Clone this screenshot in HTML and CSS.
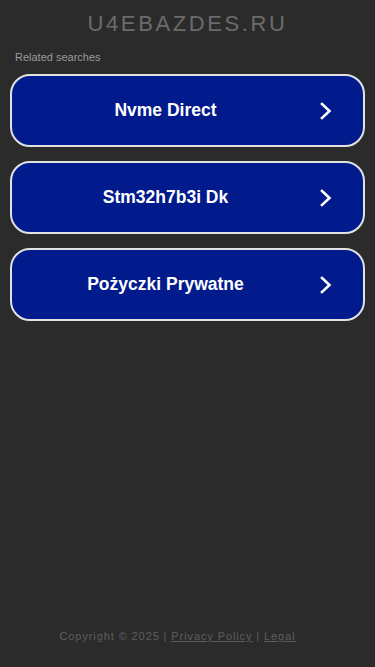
FILE: index.html
```html
<!DOCTYPE html>
<html lang="en">
<head>
  <meta charset="UTF-8" />
  <meta name="viewport" content="width=device-width, initial-scale=1.0"/>
  <title>u4ebazdes.ru</title>
  <link rel="stylesheet" href="styles.css">
</head>
<body>
  <div class="page">
    <header class="site-header">
      <h1 class="domain">U4EBAZDES.RU</h1>
    </header>

    <main class="main-content">
      <p class="related-title">Related searches</p>
      <div class="link-list">
        <a href="#" class="search-link">
          <span class="link-text">Nvme Direct</span>
          <svg class="chevron" viewBox="0 0 14 20" width="14" height="20"><path d="M3 3 L10.5 10 L3 17" fill="none" stroke="#fff" stroke-width="2.6" stroke-linecap="square"/></svg>
        </a>
        <a href="#" class="search-link">
          <span class="link-text">Stm32h7b3i Dk</span>
          <svg class="chevron" viewBox="0 0 14 20" width="14" height="20"><path d="M3 3 L10.5 10 L3 17" fill="none" stroke="#fff" stroke-width="2.6" stroke-linecap="square"/></svg>
        </a>
        <a href="#" class="search-link">
          <span class="link-text">Pożyczki Prywatne</span>
          <svg class="chevron" viewBox="0 0 14 20" width="14" height="20"><path d="M3 3 L10.5 10 L3 17" fill="none" stroke="#fff" stroke-width="2.6" stroke-linecap="square"/></svg>
        </a>
      </div>
    </main>

    <footer class="site-footer">
      Copyright © 2025 | <a href="#">Privacy Policy</a> | <a href="#">Legal</a>
    </footer>
  </div>
</body>
</html>
```

FILE: styles.css
```css
* { box-sizing: border-box; }
body {
  margin: 0;
  padding: 0;
  font-family: "Liberation Sans", Arial, sans-serif;
  background-color: #2b2b2b;
}
.page {
  min-height: 667px;
  display: flex;
  flex-direction: column;
}
.site-header {
  padding-top: 11px;
  text-align: center;
}
.domain {
  margin: 0;
  font-size: 22px;
  font-weight: normal;
  letter-spacing: 2.6px;
  color: #6b6b6b;
  line-height: 26px;
}
.main-content {
  padding: 0 10px;
  flex: 1;
}
.related-title {
  margin: 14px 0 10px 5px;
  font-size: 11px;
  color: #9a9a9a;
  line-height: 13px;
}
.link-list {
  display: flex;
  flex-direction: column;
  gap: 14px;
}
.search-link {
  display: flex;
  align-items: center;
  height: 73px;
  padding-right: 30px;
  background-color: #011a8c;
  border: 2px solid #e2e2e2;
  border-radius: 20px;
  text-decoration: none;
}
.link-text {
  flex: 1;
  text-align: center;
  color: #fff;
  font-size: 17.5px;
  font-weight: bold;
}
.chevron {
  flex-shrink: 0;
}
.site-footer {
  text-align: center;
  font-size: 11px;
  letter-spacing: 0.9px;
  color: #5e5e5e;
  padding: 0 20px 25px 0;
}
.site-footer a {
  color: #5e5e5e;
}
```
